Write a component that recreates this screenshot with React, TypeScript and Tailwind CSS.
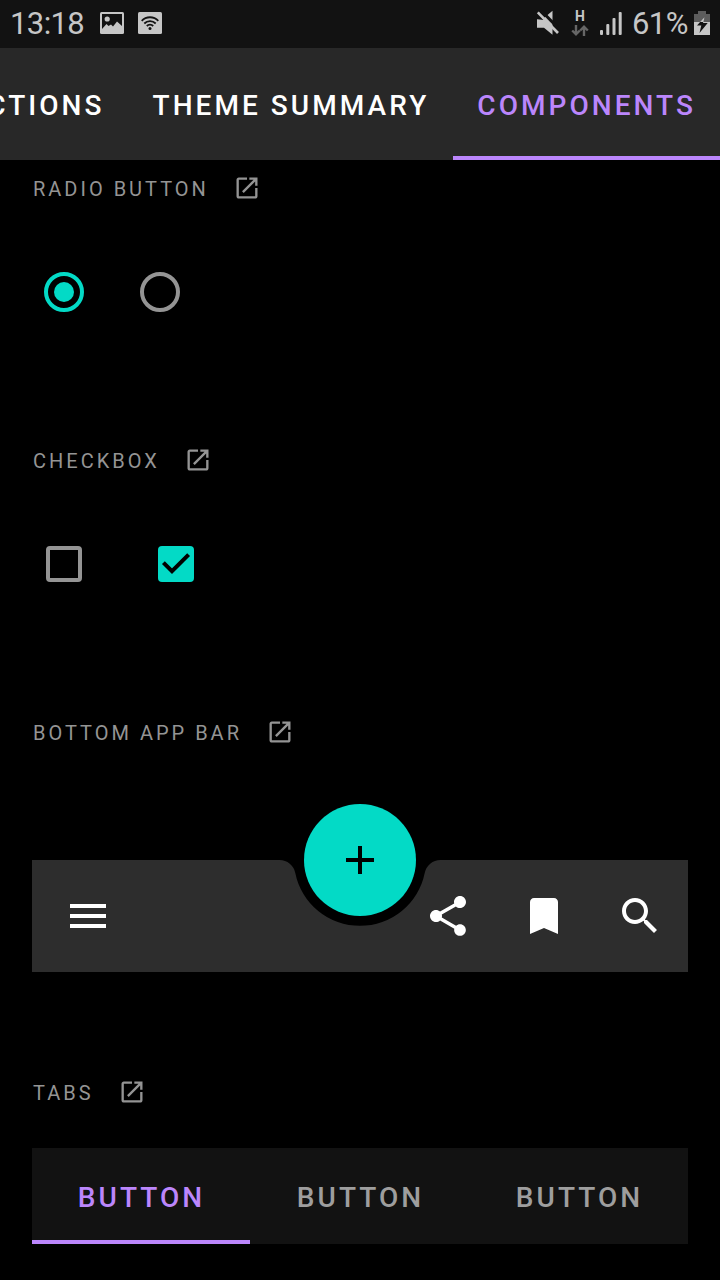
import type { ReactNode } from "react";

function Icon({ d, className }: { d: string; className: string }) {
  return (
    <svg viewBox="0 0 24 24" className={`shrink-0 ${className}`} fill="currentColor" aria-hidden="true">
      <path d={d} />
    </svg>
  );
}

const OPEN_IN_NEW =
  "M19 19H5V5h7V3H5c-1.11 0-2 .9-2 2v14c0 1.1.89 2 2 2h14c1.1 0 2-.9 2-2v-7h-2v7zM14 3v2h3.59l-9.83 9.83 1.41 1.41L19 6.41V10h2V3h-7z";
const MENU = "M3 18h18v-2H3v2zm0-5h18v-2H3v2zm0-7v2h18V6H3z";
const SHARE =
  "M18 16.08c-.76 0-1.44.3-1.96.77L8.91 12.7c.05-.23.09-.46.09-.7s-.04-.47-.09-.7l7.05-4.11c.54.5 1.25.81 2.04.81 1.66 0 3-1.34 3-3s-1.34-3-3-3-3 1.34-3 3c0 .24.04.47.09.7L8.04 9.81C7.5 9.31 6.79 9 6 9c-1.66 0-3 1.34-3 3s1.34 3 3 3c.79 0 1.5-.31 2.04-.81l7.12 4.16c-.05.21-.08.43-.08.65 0 1.61 1.31 2.92 2.92 2.92 1.61 0 2.92-1.31 2.92-2.92s-1.31-2.92-2.92-2.92z";
const BOOKMARK = "M17 3H7c-1.1 0-2 .9-2 2v16l7-3 7 3V5c0-1.1-.9-2-2-2z";
const SEARCH =
  "M15.5 14h-.79l-.28-.27C15.41 12.59 16 11.11 16 9.5 16 5.91 13.09 3 9.5 3S3 5.91 3 9.5 5.91 16 9.5 16c1.61 0 3.09-.59 4.23-1.57l.27.28v.79l5 4.99L20.49 19l-4.99-5zm-6 0C7.01 14 5 11.99 5 9.5S7.01 5 9.5 5 14 7.01 14 9.5 11.99 14 9.5 14z";
const ADD = "M19 13h-6v6h-2v-6H5v-2h6V5h2v6h6v2z";

function StatusBar() {
  return (
    <header className="flex h-12 shrink-0 items-center justify-between bg-[#121212] px-[10px] pb-[2px] text-[31px] leading-none text-[#c6c6c6]">
      <div className="flex items-center">
        <span className="w-[90px] tracking-[-0.6px]">13:18</span>
        <svg viewBox="0 0 24 22" className="h-[22px] w-6" aria-hidden="true">
          <rect width="24" height="22" rx="1.5" fill="currentColor" />
          <path d="M2 2h20v12l-5-4.5-4 5-2-2-2.5 1.5L6.5 12 2 17z" fill="#121212" />
          <circle cx="7.2" cy="7" r="2.6" fill="currentColor" />
        </svg>
        <svg viewBox="0 0 24 22" className="ml-[14px] h-[22px] w-6" aria-hidden="true">
          <rect width="24" height="22" rx="1.5" fill="currentColor" />
          <g fill="none" stroke="#121212" strokeWidth="1.8">
            <path d="M3.7 8.8a11.5 11.5 0 0 1 16.6 0" />
            <path d="M6.3 11.5a8 8 0 0 1 11.4 0" />
            <path d="M8.8 14a4.5 4.5 0 0 1 6.4 0" />
          </g>
          <circle cx="12" cy="16.5" r="1.5" fill="#121212" />
        </svg>
      </div>
      <div className="flex items-center">
        <svg viewBox="0 0 24 26" className="h-[26px] w-6" aria-hidden="true">
          <path d="M2 8h7l8.5-7.3v24L9 17.700H2z" fill="currentColor" />
          <path d="M4.800-.8l20 20.500" stroke="#121212" strokeWidth="3" />
          <path d="M-1 1v8l10 1z" fill="#121212" />
          <path d="M2.800 2.300l20.200 20.700" stroke="currentColor" strokeWidth="2.600" />
        </svg>
        <div className="ml-3 flex w-[18px] flex-col items-center gap-[3px]">
          <span className="text-[14px] leading-[12px] font-bold">H</span>
          <svg viewBox="0 0 18 11" className="h-[11px] w-[18px] text-[#666666]" fill="none" stroke="currentColor" strokeWidth="2.4" aria-hidden="true">
            <path d="M5 0v9M1.2 5.5 5 9.3l3.800-3.800M13 11V2M9.200 5.500 13 1.700l3.800 3.800" />
          </svg>
        </div>
        <svg viewBox="0 0 22 23" className="ml-[11px] h-[23px] w-[22px]" fill="currentColor" aria-hidden="true">
          <rect x="0" y="18" width="3" height="5" rx="1" />
          <rect x="6.3" y="12" width="3" height="11" rx="1" />
          <rect x="12.5" y="6" width="3" height="17" rx="1" />
          <rect x="18.7" y="0" width="3" height="23" rx="1" />
        </svg>
        <span className="ml-[10px] w-[62px] tracking-[-0.6px]">61%</span>
        <svg viewBox="0 0 16 24" className="h-6 w-4" aria-hidden="true">
          <path d="M4 0h8v3h4v8H0V3h4z" fill="#5c5c5c" />
          <path d="M0 11h16v13H0z" fill="currentColor" />
          <path d="M10.500 6 3 14.500h4.300L5.500 22l8.200-10H9z" fill="#121212" />
          <path d="M10.500 6 6 11h3.500z" fill="currentColor" />
        </svg>
      </div>
    </header>
  );
}

function TopTab({ label, active = false }: { label: string; active?: boolean }) {
  return (
    <div
      className={`flex h-28 shrink-0 items-center border-b-4 px-6 pt-2 ${
        active ? "border-[#bb86fc] text-[#bb86fc]" : "border-transparent text-white"
      }`}
    >
      {label}
    </div>
  );
}

function Section({ title, height, children }: { title: string; height: string; children: ReactNode }) {
  return (
    <section className={`flex shrink-0 flex-col px-8 ${height}`}>
      <h2 className="flex h-14 items-center gap-6 pl-px text-[20px] tracking-[3px] text-[#949494]">
        <span className="mt-[2px]">{title}</span>
        <Icon d={OPEN_IN_NEW} className="size-7" />
      </h2>
      {children}
    </section>
  );
}

export default function App() {
  return (
    <div className="flex h-[1280px] w-[720px] flex-col overflow-hidden bg-black font-['Roboto',sans-serif]">
      <StatusBar />
      <nav className="flex h-28 shrink-0 justify-end overflow-hidden bg-[#282828] text-[28px] leading-none font-medium tracking-[3.05px] whitespace-nowrap">
        <TopTab label="CTIONS" />
        <TopTab label="THEME SUMMARY" />
        <TopTab label="COMPONENTS" active />
      </nav>
      <main className="flex flex-col">
        <Section title="RADIO BUTTON" height="h-[272px]">
          <div className="mt-14 flex gap-14 pl-3">
            <div className="flex size-10 items-center justify-center rounded-full border-4 border-[#03dac6]">
              <div className="size-5 rounded-full bg-[#03dac6]" />
            </div>
            <div className="size-10 rounded-full border-4 border-[#949494]" />
          </div>
        </Section>
        <Section title="CHECKBOX" height="h-[272px]">
          <div className="mt-[58px] flex gap-[76px] pl-[14px]">
            <div className="size-9 rounded-[4px] border-4 border-[#949494]" />
            <div className="flex size-9 items-center justify-center rounded-[4px] bg-[#03dac6]">
              <svg viewBox="0 0 36 36" className="size-9" fill="none" stroke="black" strokeWidth="4" aria-hidden="true">
                <path d="M5.400 16.600 14 25.200 30.600 8.600" />
              </svg>
            </div>
          </div>
        </Section>
        <Section title="BOTTOM APP BAR" height="h-[360px]">
          <div className="relative mt-[100px] h-28">
            <div className="flex h-28 items-center bg-[#2d2d2d] px-8 text-white [clip-path:path('M0_0H247.6A16_16_0_0_1_263.3_12.9A66_66_0_0_0_392.7_12.9A16_16_0_0_1_408.4_0H656V112H0Z')]">
              <Icon d={MENU} className="mr-auto size-12" />
              <div className="-mr-2 flex gap-12">
                <Icon d={SHARE} className="size-12" />
                <Icon d={BOOKMARK} className="size-12" />
                <Icon d={SEARCH} className="size-12" />
              </div>
            </div>
            <div className="absolute -top-14 left-1/2 flex size-28 -translate-x-1/2 items-center justify-center rounded-full bg-[#03dac6] text-black">
              <Icon d={ADD} className="size-12" />
            </div>
          </div>
        </Section>
        <Section title="TABS" height="h-[216px]">
          <div className="mt-7 grid h-24 shrink-0 grid-cols-[218px_219px_219px] bg-[#121212] text-[28px] leading-none font-medium tracking-[3.05px] text-[#9e9e9e]">
            <div className="flex items-center justify-center border-b-4 border-[#bb86fc] pt-2 pl-px text-[#bb86fc]">BUTTON</div>
            <div className="flex items-center justify-center pt-1 pl-[2px]">BUTTON</div>
            <div className="flex items-center justify-center pt-1 pl-[2px]">BUTTON</div>
          </div>
        </Section>
      </main>
    </div>
  );
}
